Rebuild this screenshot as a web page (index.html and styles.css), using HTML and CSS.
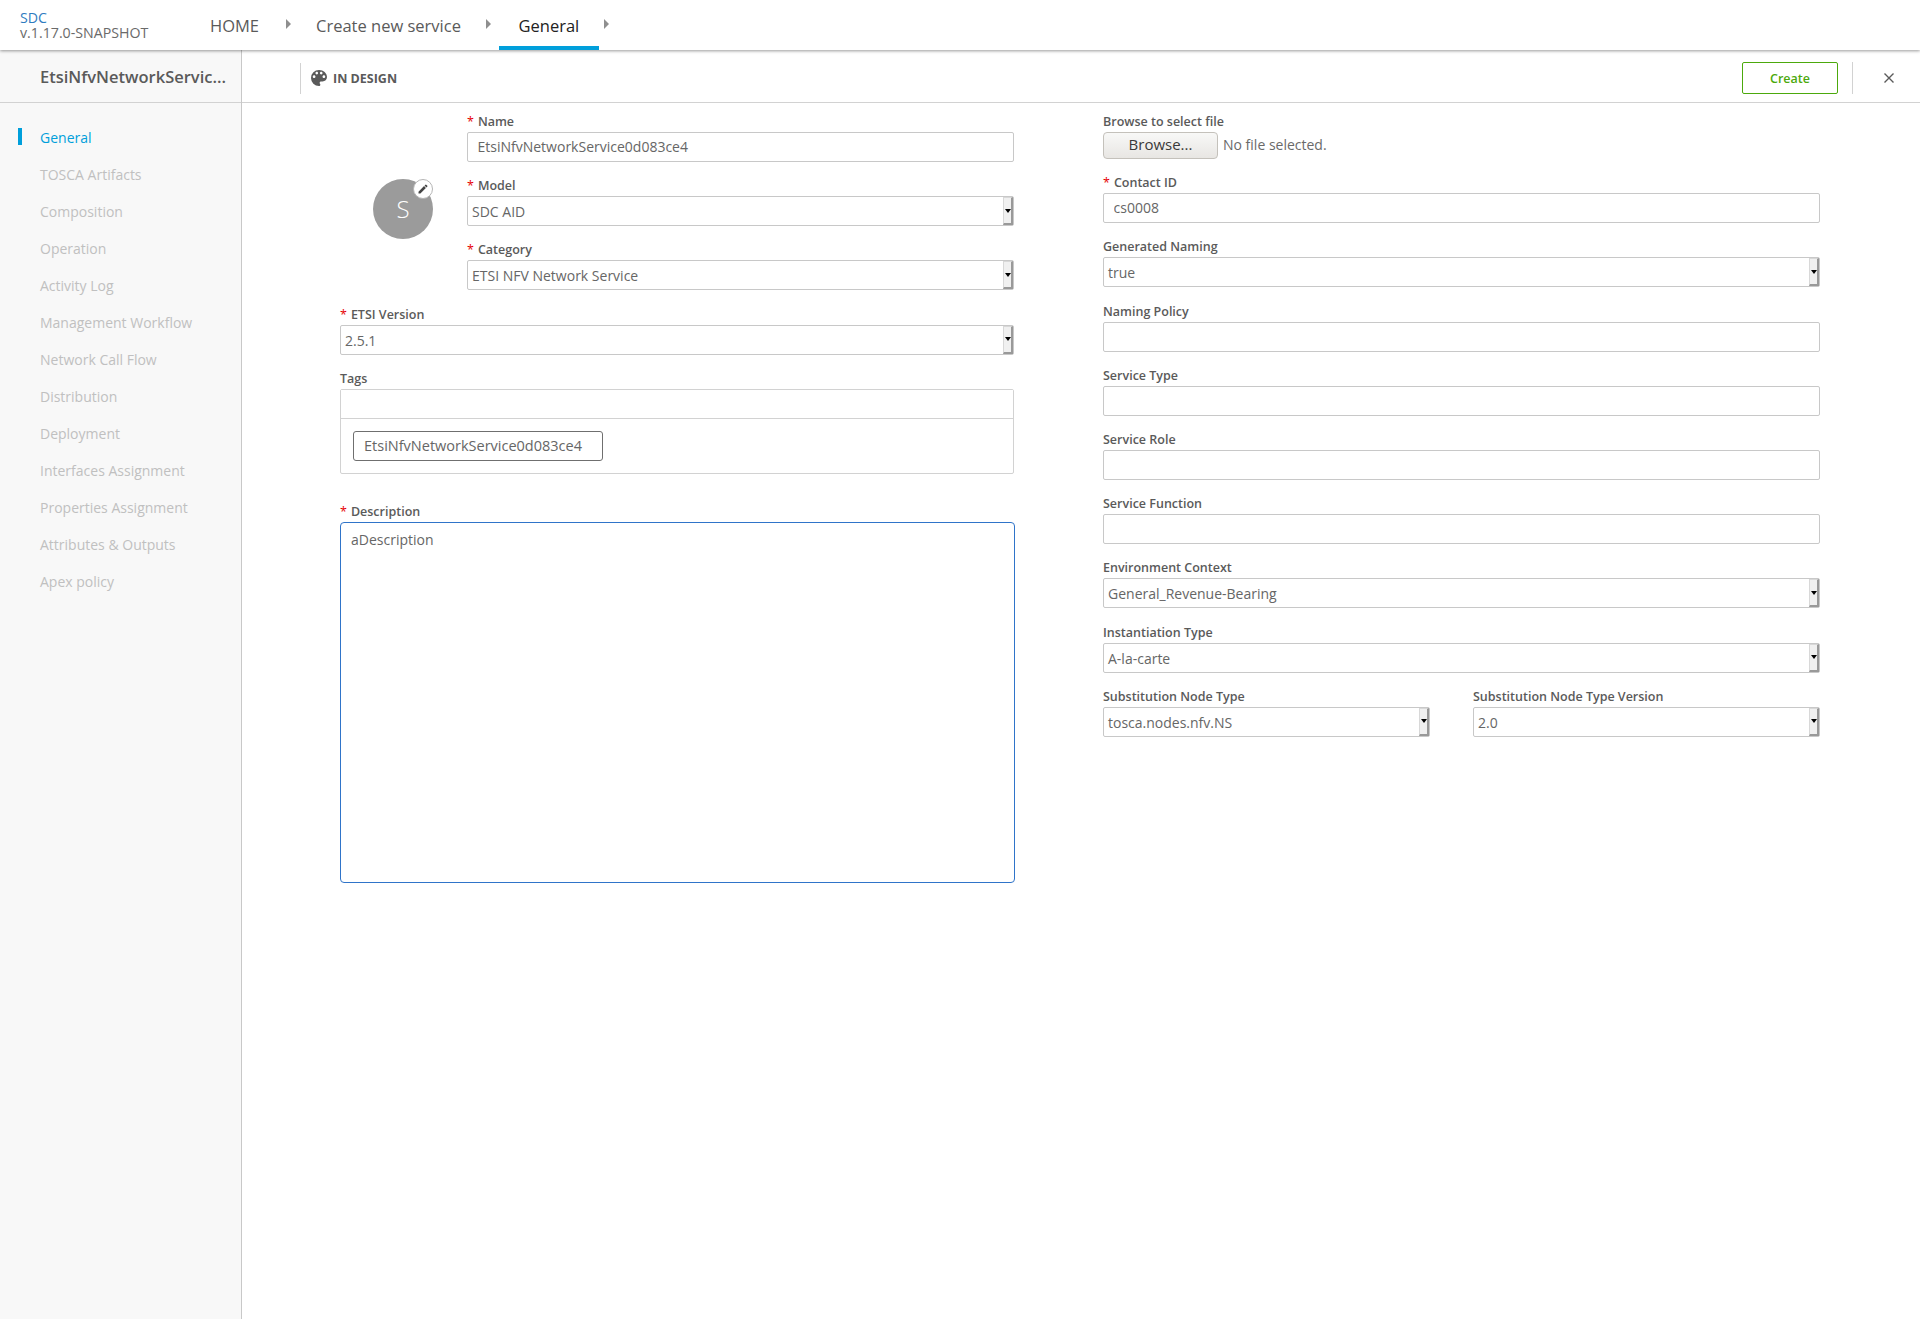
FILE: index.html
```html
<!DOCTYPE html>
<html lang="en">
<head>
  <meta charset="UTF-8"/>
  <title>SDC - General</title>
  <link rel="stylesheet" href="styles.css">
</head>
<body>

  <header class="top-bar">
    <div class="brand">
      <div class="brand-name">SDC</div>
      <div class="brand-version">v.1.17.0-SNAPSHOT</div>
    </div>
    <nav class="crumbs">
      <a class="crumb crumb-home" href="#">HOME</a>
      <span class="crumb-arrow arrow-one"></span>
      <a class="crumb crumb-service" href="#">Create new service</a>
      <span class="crumb-arrow arrow-two"></span>
      <a class="crumb crumb-active" href="#">General</a>
      <span class="crumb-arrow arrow-three"></span>
    </nav>
  </header>

  <div class="page">
    <aside class="sidebar">
      <div class="sidebar-title">EtsiNfvNetworkServic...</div>
      <ul class="side-menu">
        <li class="active">General</li>
        <li>TOSCA Artifacts</li>
        <li>Composition</li>
        <li>Operation</li>
        <li>Activity Log</li>
        <li>Management Workflow</li>
        <li>Network Call Flow</li>
        <li>Distribution</li>
        <li>Deployment</li>
        <li>Interfaces Assignment</li>
        <li>Properties Assignment</li>
        <li>Attributes &amp; Outputs</li>
        <li>Apex policy</li>
      </ul>
    </aside>

    <main class="content">
      <div class="toolbar">
        <div class="status">
          <svg class="status-icon" viewBox="3 3 18 18"><path d="M12 3a9 9 0 0 0 0 18c.83 0 1.5-.67 1.5-1.5 0-.39-.15-.74-.39-1.01-.23-.26-.38-.61-.38-.99 0-.83.67-1.5 1.5-1.5H16c2.76 0 5-2.24 5-5 0-4.42-4.03-8-9-8zm-5.500 9c-.83 0-1.500-.67-1.500-1.500S5.670 9 6.500 9 8 9.670 8 10.500 7.330 12 6.500 12zm3-4C8.670 8 8 7.330 8 6.500S8.670 5 9.500 5s1.500.67 1.500 1.500S10.330 8 9.500 8zm5 0c-.83 0-1.500-.67-1.500-1.500S13.670 5 14.500 5s1.500.67 1.500 1.500S15.330 8 14.500 8zm3 4c-.83 0-1.500-.67-1.500-1.500S16.670 9 17.500 9s1.500.67 1.500 1.500-.67 1.500-1.500 1.500z"/></svg>
          <span>IN DESIGN</span>
        </div>
        <button class="create-btn">Create</button>
        <div class="close-area">
          <svg class="close-icon" viewBox="0 0 10 10"><path d="M0.500 0.500L9.500 9.500M9.500 0.500L0.500 9.500"/></svg>
        </div>
      </div>

      <form class="form">
        <div class="col col-left">
          <div class="top-row">
            <div class="avatar">
              S
              <span class="avatar-edit">
                <svg viewBox="0 0 24 24"><path d="M3 17.250V21h3.750L17.810 9.940l-3.750-3.750L3 17.250zM20.710 7.040a1 1 0 0 0 0-1.410l-2.340-2.340a1 1 0 0 0-1.410 0l-1.830 1.830 3.750 3.750 1.830-1.830z"/></svg>
              </span>
            </div>
            <div class="top-fields">
              <div class="field">
                <label class="required">Name</label>
                <input class="text-input" type="text" value="EtsiNfvNetworkService0d083ce4">
              </div>
              <div class="field">
                <label class="required">Model</label>
                <div class="select"><span class="select-value">SDC AID</span><span class="select-btn"></span></div>
              </div>
              <div class="field">
                <label class="required">Category</label>
                <div class="select"><span class="select-value">ETSI NFV Network Service</span><span class="select-btn"></span></div>
              </div>
            </div>
          </div>
          <div class="field">
            <label class="required">ETSI Version</label>
            <div class="select"><span class="select-value">2.5.1</span><span class="select-btn"></span></div>
          </div>
          <div class="field field-tags">
            <label>Tags</label>
            <div class="tags-box">
              <input class="tags-input" type="text">
              <div class="tags-list"><span class="tag">EtsiNfvNetworkService0d083ce4</span></div>
            </div>
          </div>
          <div class="field">
            <label class="required">Description</label>
            <textarea class="description">aDescription</textarea>
          </div>
        </div>

        <div class="col col-right">
          <div class="field">
            <label>Browse to select file</label>
            <div class="file-row">
              <button type="button" class="browse-btn">Browse...</button>
              <span class="file-name">No file selected.</span>
            </div>
          </div>
          <div class="field">
            <label class="required">Contact ID</label>
            <input class="text-input" type="text" value="cs0008">
          </div>
          <div class="field">
            <label>Generated Naming</label>
            <div class="select"><span class="select-value">true</span><span class="select-btn"></span></div>
          </div>
          <div class="field">
            <label>Naming Policy</label>
            <input class="text-input" type="text">
          </div>
          <div class="field">
            <label>Service Type</label>
            <input class="text-input" type="text">
          </div>
          <div class="field">
            <label>Service Role</label>
            <input class="text-input" type="text">
          </div>
          <div class="field">
            <label>Service Function</label>
            <input class="text-input" type="text">
          </div>
          <div class="field">
            <label>Environment Context</label>
            <div class="select"><span class="select-value">General_Revenue-Bearing</span><span class="select-btn"></span></div>
          </div>
          <div class="field">
            <label>Instantiation Type</label>
            <div class="select"><span class="select-value">A-la-carte</span><span class="select-btn"></span></div>
          </div>
          <div class="field-pair">
            <div class="field">
              <label>Substitution Node Type</label>
              <div class="select"><span class="select-value">tosca.nodes.nfv.NS</span><span class="select-btn"></span></div>
            </div>
            <div class="field">
              <label>Substitution Node Type Version</label>
              <div class="select"><span class="select-value">2.0</span><span class="select-btn"></span></div>
            </div>
          </div>
        </div>
      </form>
    </main>
  </div>

</body>
</html>
```

FILE: styles.css
```css
* {
  margin: 0; padding: 0;
  box-sizing: border-box;
  font-family: 'Open Sans', sans-serif;
}

html, body {
  height: 100%;
  overflow: hidden;
}

body {
  background: #fff;
  color: #5a5a5a;
  display: flex;
  flex-direction: column;
}

/* Top bar */
.top-bar {
  height: 50px;
  flex: none;
  display: flex;
  background: #fff;
  box-shadow: 0 1px 3px rgba(0,0,0,0.4);
  position: relative;
  z-index: 2;
}

.brand {
  width: 210px;
  padding: 10px 0 0 20px;
  font-size: 14.200px;
  line-height: 15px;
}

.brand-name {
  color: #2f7cbf;
}

.brand-version {
  color: #6a6a6a;
}

.crumbs {
  display: flex;
  height: 50px;
}

.crumb {
  font-size: 16.500px;
  line-height: 51px;
  color: #5a5a5a;
  text-decoration: none;
}

.crumb-active {
  color: #222;
  font-weight: 500;
  width: 100px;
  text-align: center;
  border-bottom: 4px solid #009fdb;
  line-height: 52px;
}

.crumb-arrow {
  width: 0;
  height: 0;
  margin-top: 19px;
  border-left: 5px solid #8f8f8f;
  border-top: 5px solid transparent;
  border-bottom: 5px solid transparent;
}

.arrow-one { margin-left: 27px; margin-right: 25px; }
.arrow-two { margin-left: 25px; margin-right: 8px; }
.arrow-three { margin-left: 5px; }

/* Page */
.page {
  flex: 1;
  display: flex;
  min-height: 0;
}

.sidebar {
  width: 242px;
  flex: none;
  background: #f8f8f8;
  border-right: 1px solid #c8c8c8;
}

.sidebar-title {
  height: 53px;
  padding-left: 40px;
  line-height: 53px;
  font-size: 16.500px;
  font-weight: 600;
  color: #5a5a5a;
  border-bottom: 1px solid #d2d2d2;
}

.side-menu {
  list-style: none;
  padding-top: 16px;
}

.side-menu li {
  height: 37px;
  line-height: 37px;
  padding-left: 40px;
  font-size: 14px;
  color: #c0c0c0;
  position: relative;
}

.side-menu li.active {
  color: #009fdb;
}

.side-menu li.active::before {
  content: "";
  position: absolute;
  left: 18px;
  top: 9px;
  width: 4px;
  height: 17px;
  background: #009fdb;
}

/* Toolbar */
.content {
  flex: 1;
  min-width: 0;
}

.toolbar {
  height: 53px;
  display: flex;
  align-items: center;
  border-bottom: 1px solid #d2d2d2;
  padding-top: 4px;
}

.status {
  height: 31px;
  margin-left: 58px;
  padding-left: 11px;
  flex: 1;
  display: flex;
  align-items: center;
  gap: 6px;
  font-size: 12.500px;
  font-weight: 700;
  color: #5a5a5a;
  position: relative;
}

.status::before {
  content: "";
  position: absolute;
  left: 0;
  top: 0;
  bottom: 0;
  width: 1px;
  background: #d2d2d2;
}

.status-icon {
  width: 16px;
  height: 16px;
  fill: #5a5a5a;
}

.create-btn {
  width: 96px;
  height: 32px;
  background: #fff;
  border: 1px solid #4ca90c;
  border-radius: 2px;
  color: #4ca90c;
  font-size: 12.500px;
  font-weight: 600;
}

.close-area {
  width: 68px;
  height: 32px;
  margin-left: 14px;
  padding-left: 4px;
  border-left: 1px solid #d2d2d2;
  display: flex;
  align-items: center;
  justify-content: center;
}

.close-icon {
  width: 10px;
  height: 10px;
  stroke: #5a5a5a;
  stroke-width: 1.400;
  fill: none;
}

/* Form */
.form {
  display: flex;
  gap: 89px;
  padding: 9px 100px 0 98px;
}

.col-left {
  width: 674px;
  flex: none;
}

.col-right {
  flex: 1;
  min-width: 0;
}

.top-row {
  display: flex;
}

.avatar {
  width: 60px;
  height: 60px;
  flex: none;
  margin: 67px 34px 0 33px;
  border-radius: 50%;
  background: #9b9b9b;
  color: #fff;
  font-size: 24px;
  font-weight: 300;
  line-height: 60px;
  text-align: center;
  position: relative;
}

.avatar-edit {
  position: absolute;
  top: 0;
  right: 0;
  width: 20px;
  height: 20px;
  border-radius: 50%;
  background: #fff;
  border: 1px solid #b5b5b5;
  display: flex;
  align-items: center;
  justify-content: center;
}

.avatar-edit svg {
  width: 12px;
  height: 12px;
  fill: #444;
}

.top-fields {
  flex: 1;
}

.field {
  margin-bottom: 14.200px;
}

.field label {
  display: block;
  height: 20px;
  line-height: 20px;
  font-size: 12.500px;
  font-weight: 600;
  color: #5a5a5a;
}

.required::before {
  content: "*";
  color: #e60000;
  margin-right: 4px;
  font-weight: 400;
}

.text-input {
  display: block;
  width: 100%;
  height: 30px;
  border: 1px solid #c8c8c8;
  border-radius: 2px;
  padding: 0 9.500px 2px;
  font-size: 14px;
  color: #666;
  outline: none;
}

.select {
  display: flex;
  height: 30px;
  border: 1px solid #c8c8c8;
  border-radius: 2px;
  background: #fff;
}

.select-value {
  flex: 1;
  padding-left: 4px;
  font-size: 14px;
  line-height: 29px;
  color: #666;
}

/* old style spinner button at the end of the selects */
.select-btn {
  width: 10px;
  background: #f0f0f0;
  border-left: 1px solid #d8d8d8;
  border-top: 1px solid #d8d8d8;
  border-right: 2px solid #999;
  border-bottom: 2px solid #999;
  display: flex;
  align-items: center;
  justify-content: center;
}

.select-btn::after {
  content: "";
  width: 0;
  height: 0;
  border-top: 4px solid #000;
  border-left: 3px solid transparent;
  border-right: 3px solid transparent;
}

.field-tags {
  margin-bottom: 28.500px;
}

.tags-box {
  height: 85px;
  border: 1px solid #d2d2d2;
  border-radius: 2px;
}

.tags-input {
  display: block;
  width: 100%;
  height: 29px;
  border: none;
  border-bottom: 1px solid #d2d2d2;
  outline: none;
}

.tags-list {
  padding: 12px 12px;
}

.tag {
  display: inline-block;
  width: 250px;
  height: 30px;
  padding-left: 10px;
  border: 1px solid #6f6f6f;
  border-radius: 3px;
  font-size: 14.500px;
  line-height: 28px;
  color: #666;
}

.description {
  display: block;
  width: 675px;
  height: 361px;
  border: 1px solid #2f74c9;
  border-radius: 4px;
  padding: 7px 10px;
  font-size: 14px;
  line-height: 20px;
  color: #666;
  outline: none;
  resize: none;
}

.file-row {
  display: flex;
  align-items: flex-start;
  gap: 5px;
  height: 27px;
}

.browse-btn {
  width: 115px;
  height: 27px;
  border: 1px solid #c4c1bb;
  border-radius: 4px;
  background: linear-gradient(#f8f8f7, #e8e6e3);
  font-size: 15px;
  color: #3a3a3a;
  padding-bottom: 4px;
}

.file-name {
  font-size: 14px;
  line-height: 25px;
  color: #6a6a6a;
}

.field-pair {
  display: grid;
  grid-template-columns: 327px 1fr;
  gap: 43px;
}
```
